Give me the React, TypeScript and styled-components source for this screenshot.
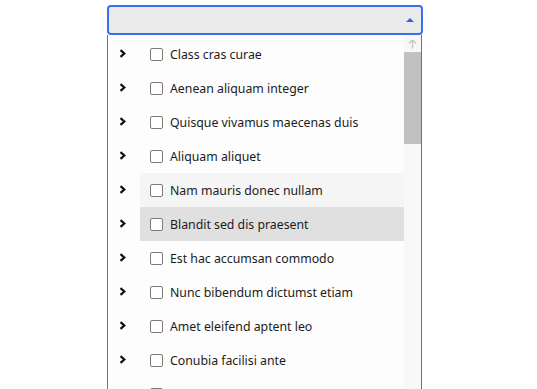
import React from 'react';
import styled, { createGlobalStyle } from 'styled-components';

const items = [
    'Class cras curae',
    'Aenean aliquam integer',
    'Quisque vivamus maecenas duis',
    'Aliquam aliquet',
    'Nam mauris donec nullam',
    'Blandit sed dis praesent',
    'Est hac accumsan commodo',
    'Nunc bibendum dictumst etiam',
    'Amet eleifend aptent leo',
    'Conubia facilisi ante',
    'Lorem ipsum dolor',
];

const GlobalStyle = createGlobalStyle`
    html, body {
        margin: 0;
        height: 100%;
        background: #ffffff;
        overflow: hidden;
    }
    body {
        font-family: "Noto Sans", "Open Sans", sans-serif;
    }
`;

const Chevron = () => (
    <svg width="8" height="9" viewBox="0 0 8 9">
        <polyline points="1.5,1.2 5.3,4.5 1.5,7.8" fill="none" stroke="#111" strokeWidth="2.2" />
    </svg>
);

const App = () => {
    return (
        <>
            <GlobalStyle />
            <Wrapper>
                <SelectBox>
                    <Caret />
                </SelectBox>
                <Panel>
                    <List>
                        {items.map((label, i) => (
                            <Row key={label}>
                                <ExpandCell>
                                    <Chevron />
                                </ExpandCell>
                                <Option state={i === 4 ? 'hover' : i === 5 ? 'active' : 'none'}>
                                    <Checkbox />
                                    <Label>{label}</Label>
                                </Option>
                            </Row>
                        ))}
                    </List>
                    <Scrollbar>
                        <ScrollArrow>
                            <svg width="9" height="10" viewBox="0 0 9 10">
                                <path d="M4.5 1 L1 4.5 M4.5 1 L8 4.5 M4.5 1 L4.5 9.5" stroke="#c4c4c4" strokeWidth="1.4" fill="none" />
                            </svg>
                        </ScrollArrow>
                        <Thumb />
                    </Scrollbar>
                </Panel>
            </Wrapper>
        </>
    );
};

const Wrapper = styled.div`
    display: flex;
    flex-flow: column;
    width: 316px;
    height: 100%;
    margin-left: 107px;
    padding-top: 5px;
    box-sizing: border-box;
`;

const SelectBox = styled.div`
    display: flex;
    align-items: center;
    justify-content: flex-end;
    height: 30px;
    box-sizing: border-box;
    border: 2px solid #3b6cf4;
    border-radius: 4px;
    background: #ebebeb;
    padding-right: 7px;
`;

const Caret = styled.div`
    width: 0;
    height: 0;
    border-left: 4px solid transparent;
    border-right: 4px solid transparent;
    border-bottom: 4px solid #2f62f0;
`;

const Panel = styled.div`
    flex: 1;
    display: flex;
    margin-right: 1px;
    border-left: 1px solid #4a6fe8;
    border-right: 1px solid #4a6fe8;
    background: #fdfdfd;
    overflow: hidden;
`;

const List = styled.div`
    flex: 1;
    display: flex;
    flex-flow: column;
    padding-top: 2px;
`;

const Row = styled.div`
    display: flex;
    height: 34px;
    flex-shrink: 0;
`;

const ExpandCell = styled.div`
    width: 32px;
    display: flex;
    align-items: center;
    padding-left: 11px;
    padding-bottom: 2px;
    box-sizing: border-box;
`;

const Option = styled.div<{ state: 'none' | 'hover' | 'active' }>`
    flex: 1;
    display: flex;
    align-items: center;
    gap: 7px;
    padding-left: 10px;
    background: ${({ state }) =>
        state === 'hover' ? '#f5f5f5' : state === 'active' ? '#e0e0e0' : 'transparent'};
`;

const Checkbox = styled.div`
    width: 13px;
    height: 13px;
    box-sizing: border-box;
    border: 1.5px solid #7a7a7a;
    border-radius: 2px;
    background: #ffffff;
    flex-shrink: 0;
`;

const Label = styled.span`
    font-size: 12.3px;
    line-height: 16px;
    padding-top: 2px;
    color: #1b1b1b;
    white-space: nowrap;
`;

const Scrollbar = styled.div`
    width: 17px;
    display: flex;
    flex-flow: column;
    background: #f8f8f8;
`;

const ScrollArrow = styled.div`
    height: 17px;
    display: flex;
    align-items: center;
    justify-content: center;
`;

const Thumb = styled.div`
    height: 92px;
    background: #c1c1c1;
`;

export default App;
